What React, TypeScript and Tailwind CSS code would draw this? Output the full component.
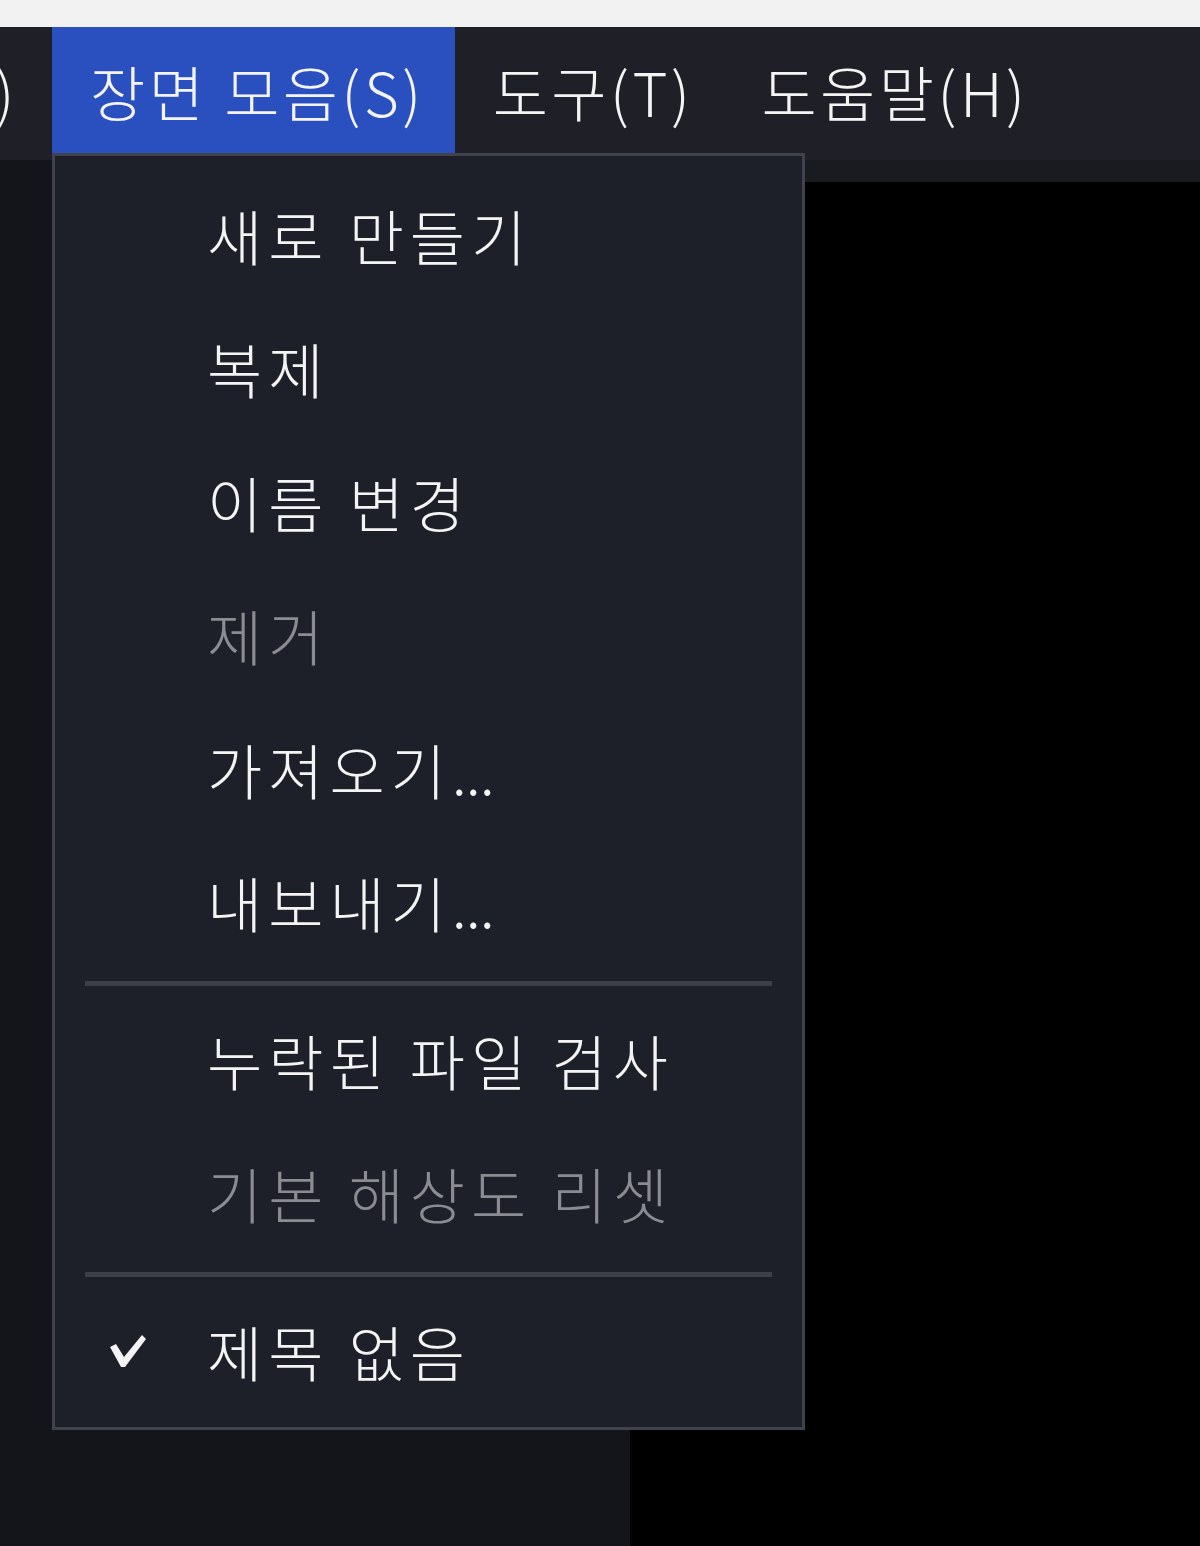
import React from "react";

const font = { fontFamily: '"Noto Sans CJK KR", "Noto Sans", sans-serif' };

type Item = { label: string; disabled?: boolean; checked?: boolean } | "sep";

const items: Item[] = [
  { label: "새로 만들기" },
  { label: "복제" },
  { label: "이름 변경" },
  { label: "제거", disabled: true },
  { label: "가져오기..." },
  { label: "내보내기..." },
  "sep",
  { label: "누락된 파일 검사" },
  { label: "기본 해상도 리셋", disabled: true },
  "sep",
  { label: "제목 없음", checked: true },
];

function Check() {
  return (
    <svg width="40" height="40" viewBox="0 0 40 40" className="absolute left-[53px] top-1/2 -translate-y-1/2">
      <polygon points="2,14 8,11 16,24 34,2 38,6 17,34 13,34" fill="#f4f4f4" />
    </svg>
  );
}

function Label({ text }: { text: string }) {
  if (text.endsWith("...")) {
    return (
      <span className="-mt-[4px]">
        {text.slice(0, -3)}
        <span className="tracking-[-1px]">...</span>
      </span>
    );
  }
  return <span className="-mt-[4px]">{text}</span>;
}

export default function App() {
  return (
    <div className="relative w-[1200px] h-[1546px] overflow-hidden bg-black font-light" style={font}>
      <div className="h-[27px] bg-[#f2f2f2]" />
      <div className="flex h-[133px] bg-[#1f2027] text-[60px] leading-none tracking-[3.5px] text-[#f4f4f4]">
        <div className="flex w-[52px] shrink-0 justify-end overflow-hidden whitespace-nowrap pr-[34px] pt-[34px]">
          프로필(P)
        </div>
        <div className="flex h-[126px] items-start whitespace-nowrap bg-[#2a4fbf] pl-[38px] pr-[30px] pt-[34px]">장면 모음(S)</div>
        <div className="flex items-start whitespace-nowrap pl-[38px] pr-[30px] pt-[34px]">도구(T)</div>
        <div className="flex items-start whitespace-nowrap pl-[38px] pr-[30px] pt-[34px]">도움말(H)</div>
      </div>
      <div className="flex h-[1386px]">
        <div className="w-[630px] bg-[#14151b]" />
        <div className="flex flex-1 flex-col">
          <div className="h-[22px] bg-[#1a1b21]" />
          <div className="flex-1 bg-black" />
        </div>
      </div>

      <div className="absolute left-[52px] top-[153px] w-[753px] h-[1277px] border-[3px] border-[#40424c] bg-[#1e2029] pt-[14px]">
        {items.map((it, i) =>
          it === "sep" ? (
            <div key={i} className="flex h-[24px] items-center px-[30px]">
              <div className="h-[5px] w-full bg-[#3c3e48]" />
            </div>
          ) : (
            <div
              key={i}
              className={`relative flex h-[133.5px] items-center pl-[152px] text-[60px] leading-none tracking-[6px] whitespace-nowrap ${
                it.disabled ? "text-[#8b8c91]" : "text-[#f4f4f4]"
              }`}
            >
              {it.checked && <Check />}
              <Label text={it.label} />
            </div>
          )
        )}
      </div>
    </div>
  );
}
